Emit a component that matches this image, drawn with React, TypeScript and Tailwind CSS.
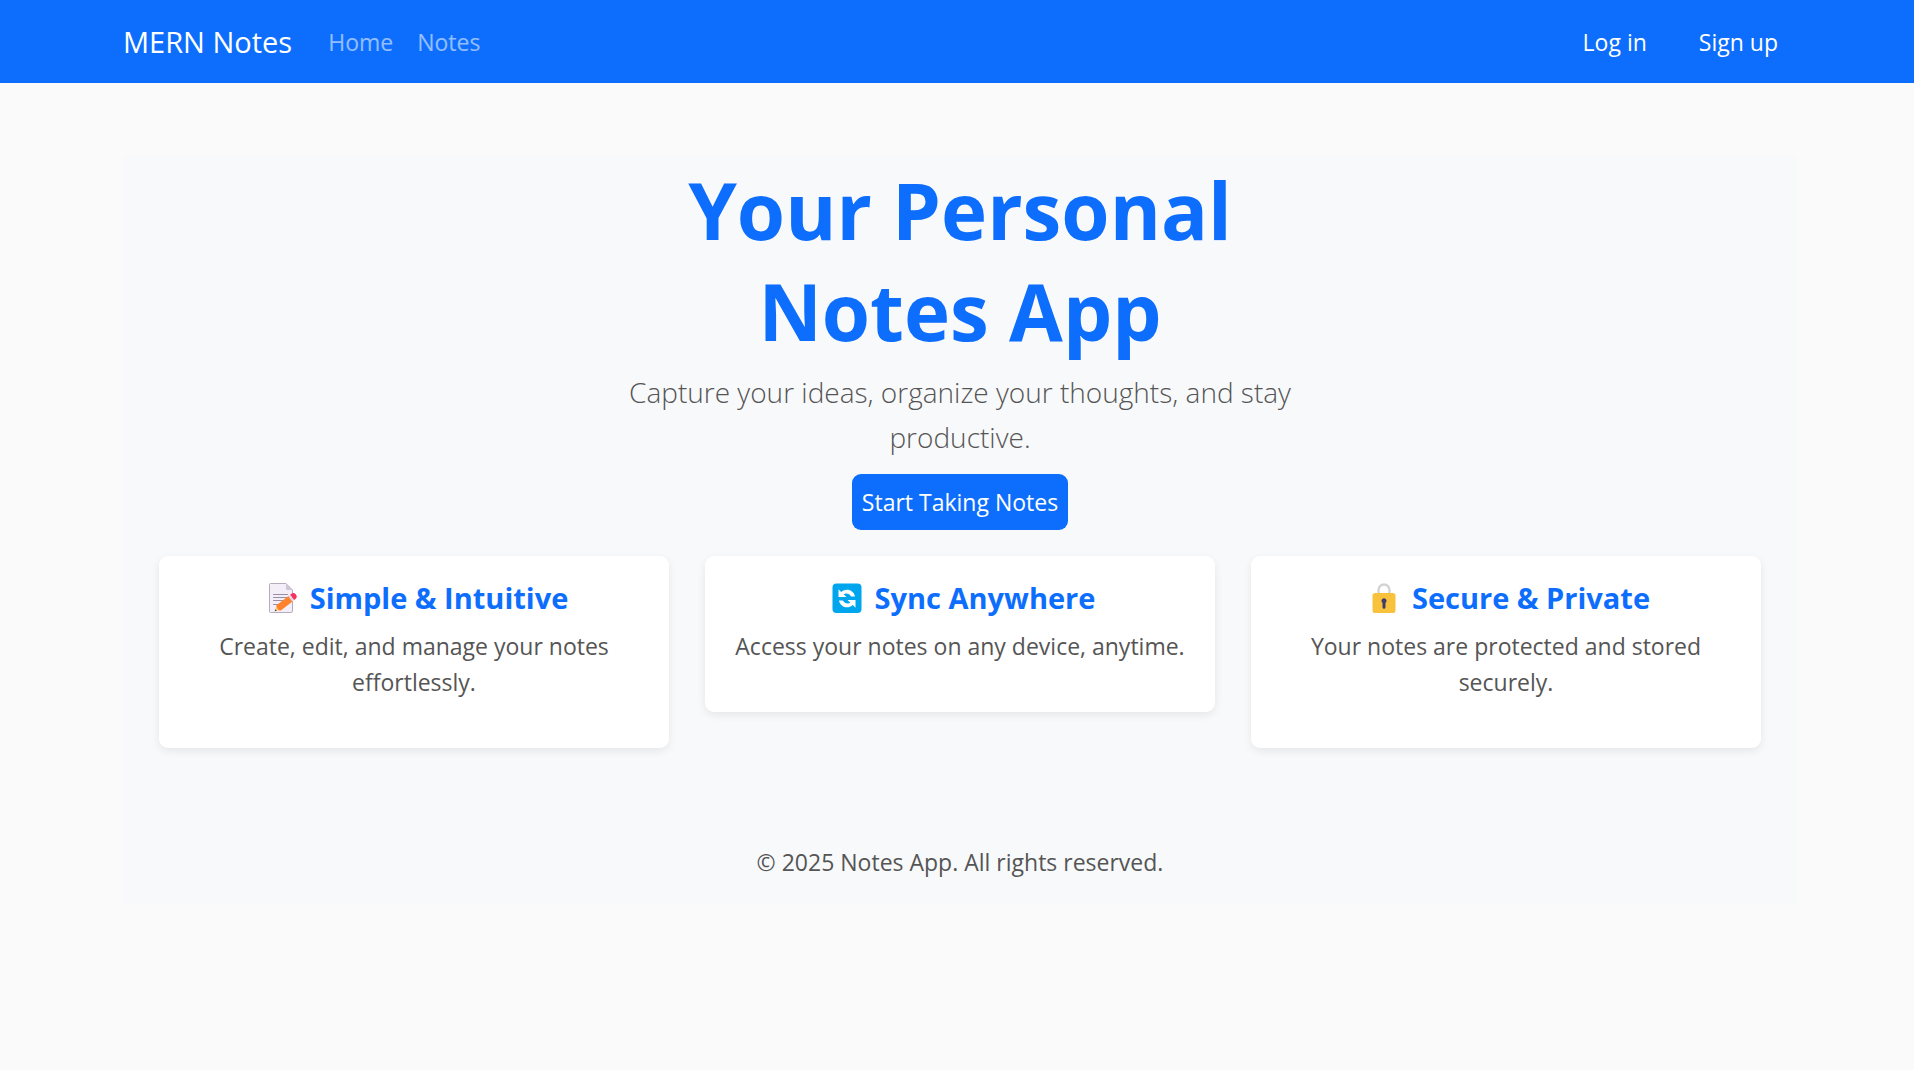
import type { ReactNode } from "react";

function MemoIcon() {
  return (
    <svg viewBox="0 0 32 32" className="h-8 w-8" aria-hidden="true">
      <path d="M4.5 1.5h15.5l6.500 6.500v21a1.500 1.500 0 0 1-1.500 1.500H4.500a1 1 0 0 1-1-1v-27a1 1 0 0 1 1-1z" fill="#f3eef8" stroke="#b4acbc" strokeWidth="1" />
      <path d="M20 1.500v5a1.500 1.500 0 0 0 1.500 1.500h5z" fill="#cdc4d6" />
      <path d="M7.500 12.500h14M7.500 15.500h14M7.500 18.500h9M7.500 22.500h6" stroke="#998ea4" strokeWidth="1.100" strokeLinecap="round" />
      <path d="M8.800 29.200l1.700-6 4.600 4.800z" fill="#ffce7c" />
      <path d="M8.800 29.200l.6-2 1.400 1.400z" fill="#402a32" />
      <path d="M10.500 23.200l12.300-9.400 4 5.400-12 9.300c-2.400.2-4.300-2.400-4.300-5.300z" fill="#ff822d" />
      <path d="M22.300 14.200l2-1.500 4 5.400-2 1.500z" fill="#e1d8ec" />
      <path d="M24.200 12.700l1.500-1.200c1.200-.9 2.900-.6 3.800.6l.7 1c.9 1.200.7 2.800-.5 3.700l-1.500 1.200z" fill="#f92f60" />
    </svg>
  );
}

function SyncIcon() {
  return (
    <svg viewBox="0 0 32 32" className="h-8 w-8" aria-hidden="true">
      <rect x="1.500" y="1.500" width="29" height="29.500" rx="4" fill="#00a6ed" />
      <path d="M7.500 7.300v7.700h8l-2.900-2.800c2.600-1.500 6-.7 7.500 2.300h3.900c-1-6.300-8.600-9.300-13.800-4.500z" fill="#fff" />
      <path d="M24.500 25.700V18h-8l2.900 2.800c-2.600 1.500-6 .7-7.500-2.300H8c1 6.300 8.600 9.300 13.800 4.500z" fill="#fff" />
    </svg>
  );
}

function LockIcon() {
  return (
    <svg viewBox="0 0 32 32" className="h-8 w-8" aria-hidden="true">
      <path d="M10.500 13V8a5.500 5.500 0 0 1 11 0v5" fill="none" stroke="#d3d3d3" strokeWidth="2.400" />
      <rect x="4.500" y="11" width="23" height="20" rx="2.800" fill="#f9c23c" />
      <path d="M16 16.200a2.600 2.600 0 0 0-1.500 4.700v4.300a1.500 1.500 0 0 0 3 0v-4.300a2.600 2.600 0 0 0-1.500-4.700z" fill="#433b6b" />
    </svg>
  );
}

const features: { icon: ReactNode; title: string; text: string }[] = [
  { icon: <MemoIcon />, title: "Simple & Intuitive", text: "Create, edit, and manage your notes effortlessly." },
  { icon: <SyncIcon />, title: "Sync Anywhere", text: "Access your notes on any device, anytime." },
  { icon: <LockIcon />, title: "Secure & Private", text: "Your notes are protected and stored securely." },
];

export default function App() {
  return (
    <div className="min-h-screen bg-[#fafafa] font-['Open_Sans',sans-serif] text-[23px] leading-9 text-[#555555]">
      <nav className="flex items-center bg-[#0d6efd] py-3 pr-[118px] pl-[123px]">
        <a href="#" className="mr-6 py-[7px] text-[29px] leading-[45px] text-white">MERN Notes</a>
        <a href="#home" className="px-3 text-white/55">Home</a>
        <a href="#notes" className="px-3 text-white/55">Notes</a>
        <div className="ml-auto flex gap-4">
          <button type="button" className="px-[18px] text-white">Log in</button>
          <button type="button" className="px-[18px] text-white">Sign up</button>
        </div>
      </nav>

      <main className="mt-[72px] mr-[117px] ml-[123px] bg-[#f8f9fb] text-center">
        <header className="mx-auto flex max-w-[720px] flex-col items-center pt-[5px]">
          <h1 className="text-[78px] leading-[101px] font-bold text-[#0d6efd]">Your Personal Notes App</h1>
          <p className="mt-2 text-[28px] leading-[45px] font-light">
            Capture your ideas, organize your thoughts, and stay productive.
          </p>
          <button type="button" className="mt-[14px] rounded-[9px] bg-[#0d6efd] px-[10px] py-[10px] text-white">
            Start Taking Notes
          </button>
        </header>

        <section className="grid grid-cols-3 items-start gap-9 px-9 pt-[26px]">
          {features.map((f) => (
            <article key={f.title} className="rounded-[9px] bg-white p-6 shadow-[0_3px_8px_rgba(0,0,0,0.08)]">
              <h2 className="flex items-center justify-center gap-3 pl-1.5 text-[29px] leading-9 font-bold text-[#0d6efd]">
                {f.icon}
                {f.title}
              </h2>
              <p className="mt-3 mb-6">{f.text}</p>
            </article>
          ))}
        </section>

        <footer className="pt-24 pb-6">© 2025 Notes App. All rights reserved.</footer>
      </main>
    </div>
  );
}
